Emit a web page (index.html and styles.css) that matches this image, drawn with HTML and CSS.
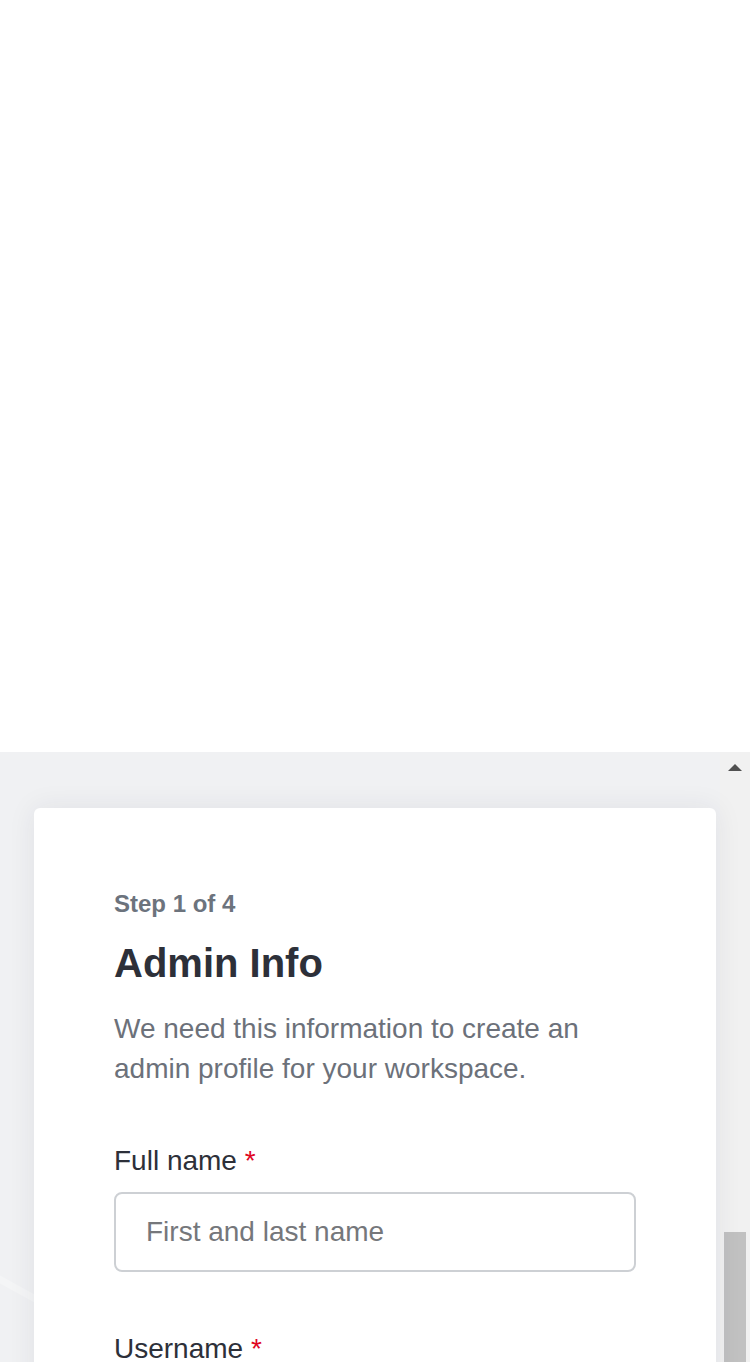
FILE: index.html
```html
<!DOCTYPE html>
<html lang="en">
<head>
<meta charset="utf-8">
<title>Admin Info</title>
<link rel="stylesheet" href="styles.css">
</head>
<body>
<div class="blank"></div>
<div class="frame">
  <div class="viewport">
    <svg class="deco" width="120" height="120" viewBox="0 0 120 120" aria-hidden="true">
      <line x1="-10" y1="14" x2="110" y2="80" stroke="#f4f5f6" stroke-width="7"/>
    </svg>
    <div class="card">
      <div class="step">Step 1 of 4</div>
      <h1 class="title">Admin Info</h1>
      <p class="lead">We need this information to create an admin profile for your workspace.</p>
      <div class="field">
        <label class="label" for="fullname">Full name <span class="req">*</span></label>
        <input class="input" id="fullname" type="text" placeholder="First and last name">
      </div>
      <div class="field field-next">
        <label class="label" for="username">Username <span class="req">*</span></label>
        <input class="input" id="username" type="text" placeholder="Username">
      </div>
    </div>
  </div>
  <div class="scrollbar">
    <div class="scroll-btn"><span class="arrow-up"></span></div>
    <div class="scroll-track"><div class="scroll-thumb"></div></div>
  </div>
</div>
</body>
</html>
```
FILE: styles.css
```css
html, body {
  margin: 0;
  padding: 0;
  background: #ffffff;
  font-family: "Liberation Sans", Arial, sans-serif;
}

.blank {
  height: 752px;
  background: #ffffff;
}

.frame {
  height: 610px;
  display: flex;
  overflow: hidden;
}

.viewport {
  position: relative;
  width: 720px;
  flex: none;
  background: #f0f1f3;
  padding: 56px 4px 0 34px;
  box-sizing: border-box;
}

.deco {
  position: absolute;
  left: 0;
  top: 508px;
}

.card {
  position: relative;
  background: #ffffff;
  border-radius: 6px;
  box-shadow: 0 0 28px rgba(40, 44, 60, 0.08);
  padding: 80px 80px 80px 80px;
  min-height: 900px;
}

.step {
  font-size: 24px;
  line-height: 32px;
  font-weight: 700;
  color: #6c737d;
}

.title {
  margin: 19px 0 0;
  font-size: 40px;
  line-height: 48px;
  font-weight: 700;
  color: #2d3039;
}

.lead {
  margin: 22px 0 0;
  font-size: 28px;
  line-height: 40px;
  color: #6c717a;
}

.field {
  margin-top: 52px;
  display: flex;
  flex-direction: column;
}

.field-next {
  margin-top: 57px;
}

.label {
  font-size: 28px;
  line-height: 40px;
  color: #2d3039;
}

.req {
  color: #e0061f;
}

.input {
  margin-top: 11px;
  height: 80px;
  box-sizing: border-box;
  border: 2px solid #cdd0d4;
  border-radius: 8px;
  padding: 0 30px;
  font-family: "Liberation Sans", Arial, sans-serif;
  font-size: 28px;
  color: #2d3039;
  background: #ffffff;
  outline: none;
}

.input::placeholder {
  color: #75777b;
}

.scrollbar {
  width: 30px;
  flex: none;
  background: #f1f1f1;
  display: flex;
  flex-direction: column;
}

.scroll-btn {
  flex: none;
  height: 30px;
  display: flex;
  justify-content: center;
  align-items: center;
}

.arrow-up {
  width: 0;
  height: 0;
  border-left: 7px solid transparent;
  border-right: 7px solid transparent;
  border-bottom: 7px solid #505050;
}

.scroll-track {
  flex: 1;
  min-height: 0;
  overflow: hidden;
  padding: 450px 4px 0;
}

.scroll-thumb {
  height: 400px;
  background: #c1c1c1;
}
```
